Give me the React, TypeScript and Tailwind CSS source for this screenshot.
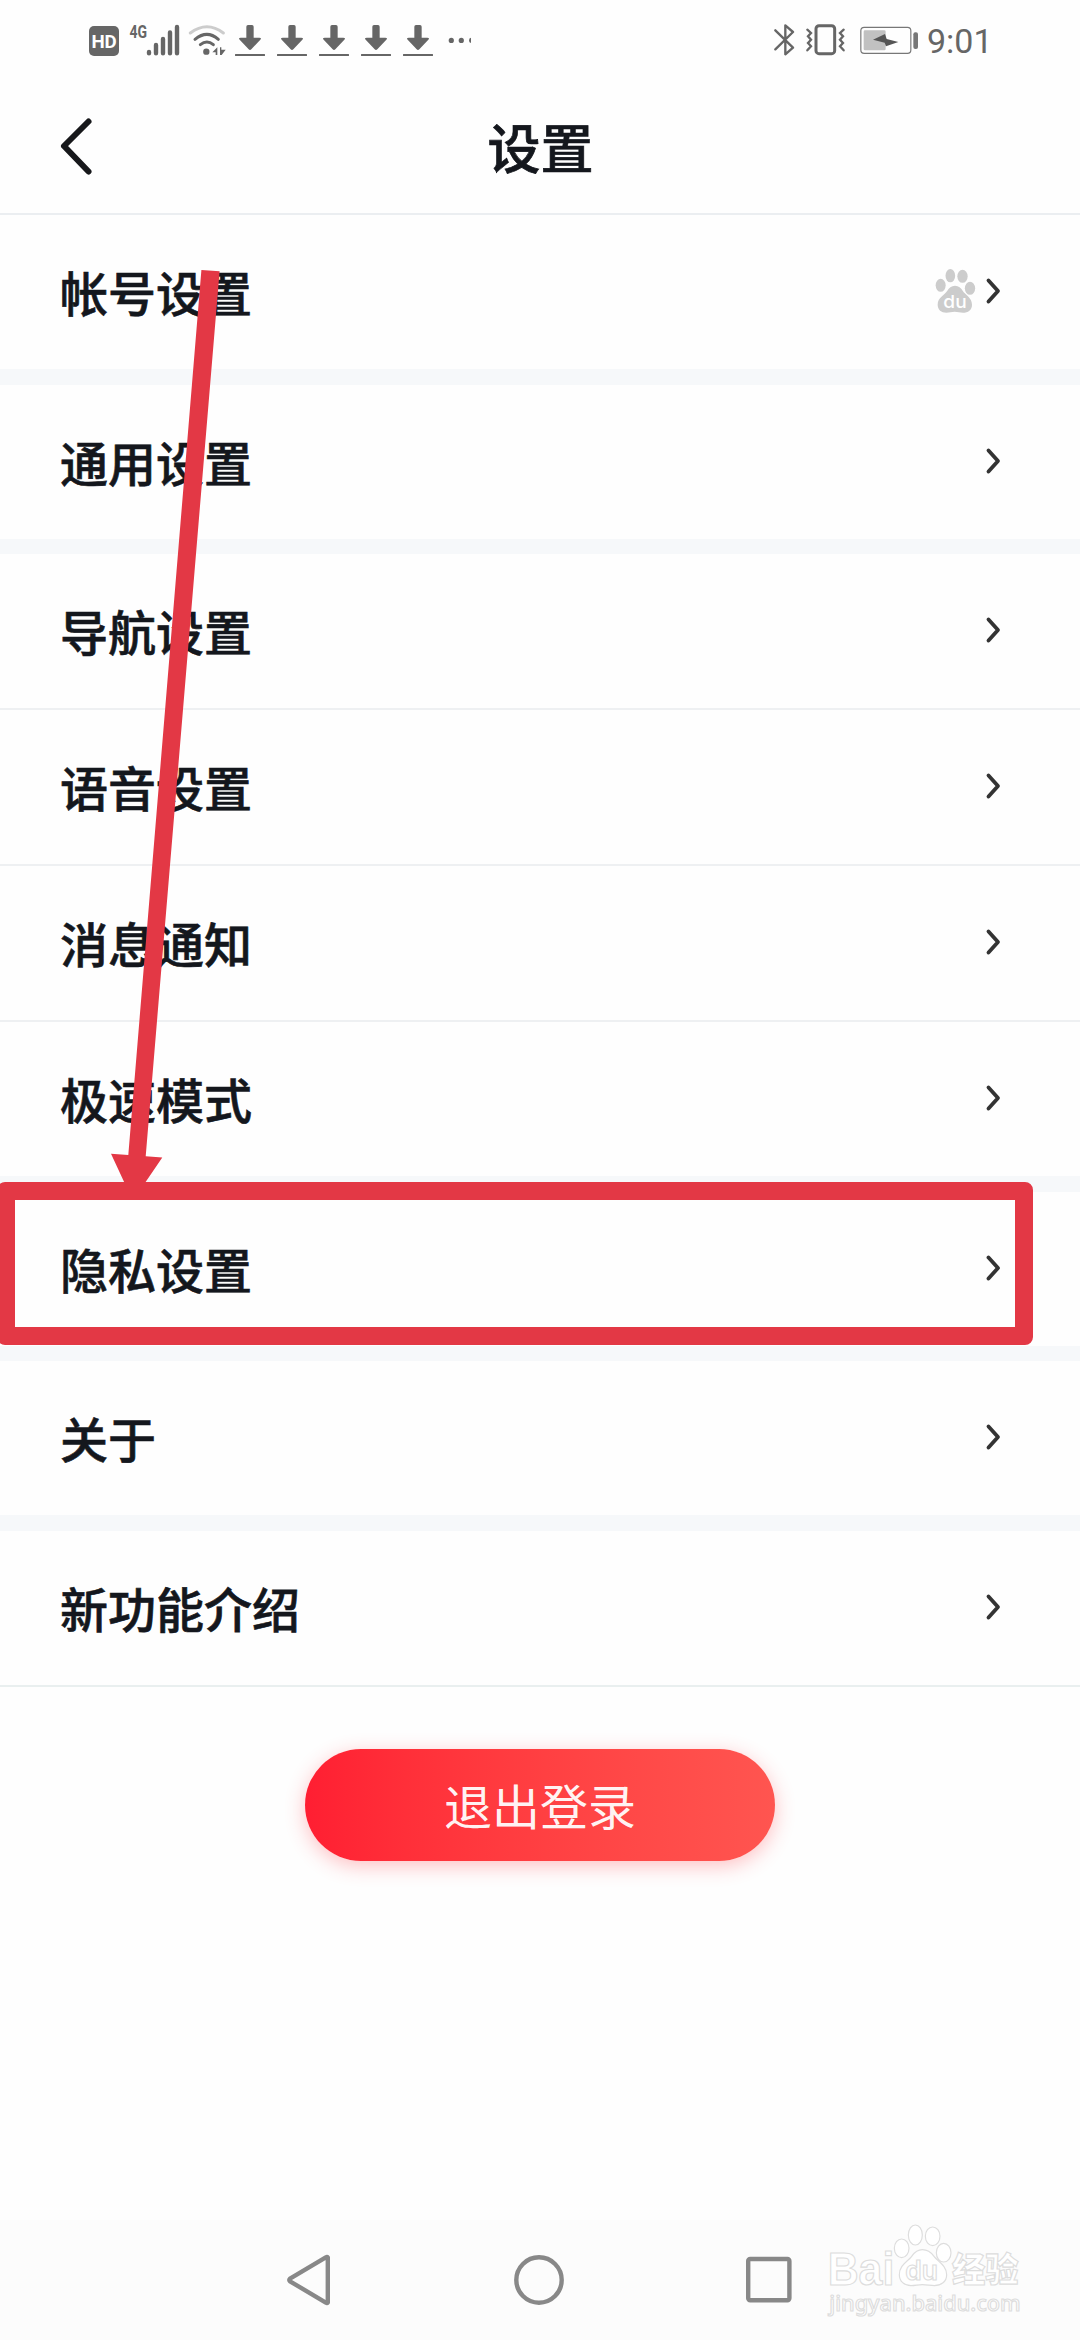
type Row = { label: string; account?: boolean }

const GROUPS: Row[][] = [
  [{ label: '帐号设置', account: true }],
  [{ label: '通用设置' }],
  [
    { label: '导航设置' },
    { label: '语音设置' },
    { label: '消息通知' },
    { label: '极速模式' },
  ],
  [{ label: '隐私设置' }],
  [{ label: '关于' }],
  [{ label: '新功能介绍' }],
]

const Download = () => (
  <svg className="h-[32px] w-[30px]" viewBox="0 0 90 96">
    <path
      d="M39 3h12q5 0 5 5v33h17q8 0 3 6L49 76q-4 4-8 0L14 47q-5-6 3-6h17V8q0-5 5-5z"
      fill="#666"
    />
    <path d="M2 93h86" stroke="#666" strokeWidth="6" strokeLinecap="round" />
  </svg>
)

const StatusBar = () => (
  <div className="flex h-[80px] items-start justify-between pr-[91px] pl-[89px]">
    <div className="flex items-start pt-[24px]">
      <div className="mt-[2px] flex h-[30px] w-[30px] items-center justify-center rounded-[5px] bg-[#666]">
        <svg className="h-[30px] w-[30px]" viewBox="0 0 30 30">
          <text
            x="2.4"
            y="21.6"
            textLength="25.4"
            lengthAdjust="spacingAndGlyphs"
            className="fill-white font-['Roboto',sans-serif] text-[19px] font-bold"
          >
            HD
          </text>
        </svg>
      </div>
      {/* network type + signal bars */}
      <svg
        className="ml-[10px] h-[34px] w-[52px] overflow-visible"
        viewBox="0 0 52 34"
      >
        <text
          x="0.4"
          y="14"
          textLength="17.6"
          lengthAdjust="spacingAndGlyphs"
          className="fill-[#666] font-['Roboto',sans-serif] text-[19px] font-bold"
        >
          4G
        </text>
        <path
          d="M20 28v1.200M27 21v8.200M34 15v14.200M41 8.500v20.700M48 3v26.200"
          stroke="#666"
          strokeWidth="4.4"
          strokeLinecap="round"
        />
      </svg>
      <svg
        className="ml-[7px] h-[34px] w-[40px]"
        viewBox="354 72 120 102"
        fill="none"
        strokeLinecap="round"
      >
        <path d="M361 99Q411 62 460 99" stroke="#ccc" strokeWidth="9" />
        <path d="M375 118Q411 88 445 118" stroke="#666" strokeWidth="9" />
        <path d="M391 134Q411 118 430 134" stroke="#666" strokeWidth="9" />
        <circle cx="409" cy="155" r="9.5" fill="#666" />
        <path d="M442 142v23h-5v-8h-10zM450 165v-23h4v7h13l-12 16z" fill="#666" />
      </svg>
      <div className="ml-[7px] flex gap-[12px]">
        {[0, 1, 2, 3, 4].map((n) => (
          <Download key={n} />
        ))}
      </div>
      <svg className="ml-[15px] h-[32px] w-[23px]" viewBox="0 0 23 32" fill="#666">
        <circle cx="3.3" cy="16.4" r="2.6" />
        <circle cx="13.3" cy="16.4" r="2.6" />
        <circle cx="23.6" cy="16.4" r="2.6" />
      </svg>
    </div>
    <div className="flex items-start pt-[24px]">
      <svg
        className="h-[32px] w-[22px]"
        viewBox="69 72 66 96"
        fill="none"
        stroke="#666"
        strokeWidth="7"
        strokeLinejoin="round"
        strokeLinecap="round"
      >
        <path d="M73 91l53 52-23 20V76l23 20-53 52" />
      </svg>
      <svg
        className="ml-[9px] h-[32px] w-[42px]"
        viewBox="162 72 126 96"
        fill="none"
        stroke="#666"
        strokeLinecap="round"
      >
        <rect x="195" y="77" width="56" height="84" rx="9" strokeWidth="9" />
        <path
          d="M169 89l11 10-9 10 9 10-9 10 9 10-11 12M278 89l-11 10 9 10-9 10 9 10-9 10 11 12"
          strokeWidth="7"
        />
      </svg>
      <svg className="ml-[12px] h-[32px] w-[60px]" viewBox="324 72 180 96">
        <rect
          x="329.5"
          y="82"
          width="150"
          height="78"
          rx="10"
          fill="none"
          stroke="#777"
          strokeWidth="3.5"
        />
        <rect x="338" y="91" width="66" height="60" rx="4" fill="#c1c1c1" />
        <path d="M366 119l36-17 5 15 35 9-37 13-4-11z" fill="#555" />
        <rect x="487" y="97" width="14" height="50" rx="6" fill="#777" />
      </svg>
      <span className="ml-[8px] w-[62px] font-['Roboto',sans-serif] text-[34px] leading-[34px] whitespace-nowrap text-[#666]">
        9:01
      </span>
    </div>
  </div>
)

const Header = () => (
  <header className="flex h-[135px] items-start border-b-2 border-[#ebeef1] pl-[58px]">
    <svg
      className="mt-[36px] h-[60px] w-[38px]"
      viewBox="58 116 38 60"
      fill="none"
      stroke="#17181b"
      strokeWidth="6"
      strokeLinecap="round"
      strokeLinejoin="round"
    >
      <path d="M88.5 121.5L64 146l24.5 25.5" />
    </svg>
    <h1 className="flex-1 pt-[30px] pr-[95px] text-center text-[53px] leading-[72px] font-medium [-webkit-text-stroke:0.7px]">
      设置
    </h1>
  </header>
)

const AccountPaw = () => (
  <svg className="h-[46px] w-[41px]" viewBox="105 145 123 138" fill="#ccc">
    <ellipse cx="122" cy="197" rx="15" ry="19.5" />
    <ellipse cx="151" cy="168" rx="14.5" ry="20" />
    <ellipse cx="187.5" cy="170" rx="15.5" ry="19.5" />
    <ellipse cx="210" cy="206" rx="15.5" ry="19.5" />
    <path d="M165 198c11 0 18 7 23 15 7 12 28 20 28 42 0 16-12 24-27 24-9 0-16-3-25-3s-16 3-25 3c-15 0-26-9-26-24 0-22 21-29 29-42 5-8 12-15 23-15z" />
    <text
      x="130"
      y="264.5"
      textLength="70"
      lengthAdjust="spacingAndGlyphs"
      className="fill-white font-['Inter',sans-serif] text-[53px] font-medium"
    >
      du
    </text>
  </svg>
)

const Chevron = () => (
  <svg
    className="h-[28px] w-[16px]"
    viewBox="0 0 16 28"
    fill="none"
    stroke="#333"
    strokeWidth="3.8"
    strokeLinecap="round"
    strokeLinejoin="round"
  >
    <path d="M3.5 3.5L13 14 3.5 24.5" />
  </svg>
)

const SettingRow = ({ label, account }: Row) => (
  <li className="box-content flex h-[154px] items-center">
    <span className="flex-1 pb-[2px] pl-[60px] text-[48px] leading-[70px] font-medium [-webkit-text-stroke:0.6px]">
      {label}
    </span>
    <span className="flex items-center gap-[9px] pr-[79px] pb-[2px]">
      {account && <AccountPaw />}
      <Chevron />
    </span>
  </li>
)

const NavBar = () => (
  <nav className="flex h-[120px] items-center justify-between bg-[#fcfcfc] pr-[286px] pl-[284px]">
    <svg
      className="h-[54px] w-[50px]"
      viewBox="284 2253 50 54"
      fill="none"
      stroke="#888"
      strokeWidth="4.4"
      strokeLinejoin="round"
    >
      <path d="M327.8 2257.6v44.8q-.5 1-2 .2L290 2281.300q-1.500-1.300 0-2.600l35.800-21.300q1.500-.8 2 .2z" />
    </svg>
    <svg
      className="h-[54px] w-[54px]"
      viewBox="0 0 54 54"
      fill="none"
      stroke="#888"
      strokeWidth="4.4"
    >
      <circle cx="27" cy="27" r="22.7" />
    </svg>
    <svg
      className="h-[54px] w-[50px]"
      viewBox="0 0 50 54"
      fill="none"
      stroke="#888"
      strokeWidth="4.4"
    >
      <rect x="4.2" y="6" width="41.2" height="41.2" rx="2" />
    </svg>
  </nav>
)

const Watermark = () => (
  <svg
    className="absolute top-[2220px] left-[820px] h-[100px] w-[210px]"
    viewBox="60 60 630 300"
    fill="#fff"
    stroke="#ddd"
    strokeWidth="3.5"
  >
    <text
      x="83"
      y="254"
      textLength="200"
      lengthAdjust="spacingAndGlyphs"
      className="font-['Liberation_Sans',sans-serif] text-[136px] font-bold"
    >
      Bai
    </text>
    <ellipse cx="305" cy="145" rx="22" ry="28" />
    <ellipse cx="346" cy="105" rx="21" ry="30" />
    <ellipse cx="398" cy="109" rx="22" ry="28" />
    <ellipse cx="431" cy="158" rx="22" ry="28" />
    <path d="M367 149c-15 0-25 10-32 20-10 15-37 25-37 55 0 20 15 33 35 33 12 0 22-3 34-3 14 0 24 3 36 3 20 0 37-12 37-33 0-28-27-40-38-55-8-11-18-20-35-20z" />
    <text
      x="316"
      y="240"
      textLength="98"
      lengthAdjust="spacingAndGlyphs"
      className="font-['Inter',sans-serif] text-[82px] font-semibold"
    >
      du
    </text>
    <text
      x="456"
      y="245"
      textLength="200"
      lengthAdjust="spacingAndGlyphs"
      className="font-['Noto_Sans_CJK_SC',sans-serif] text-[102px] font-black"
    >
      经验
    </text>
    <text
      x="88"
      y="332"
      textLength="574"
      lengthAdjust="spacingAndGlyphs"
      className="font-['Noto_Sans',sans-serif] text-[66px] font-medium"
    >
      jingyan.baidu.com
    </text>
  </svg>
)

export default function App() {
  return (
    <div className="relative flex h-[2340px] w-[1080px] flex-col overflow-hidden bg-[#fefefe] font-['Noto_Sans_CJK_SC',sans-serif] text-[#14171d]">
      <StatusBar />
      <Header />
      <main className="flex flex-1 flex-col">
        <div className="flex flex-col gap-[15.5px] border-b-2 border-[#e9efef] bg-[#f6f8fa]">
          {GROUPS.map((rows) => (
            <ul
              key={rows[0].label}
              className="divide-y-2 divide-[#eef0f2] bg-[#fefefe]"
            >
              {rows.map((row) => (
                <SettingRow key={row.label} {...row} />
              ))}
            </ul>
          ))}
        </div>
        <button className="mt-[62px] h-[112px] w-[470px] self-center rounded-full bg-linear-to-r from-[#ff1e32] to-[#ff5550] pb-px text-[48px] leading-[70px] text-white/95 shadow-[0_5px_20px_rgba(255,50,60,0.3)]">
          退出登录
        </button>
      </main>
      <NavBar />

      {/* annotation: arrow pointing at the privacy row */}
      <svg
        className="absolute top-[260px] left-[100px] h-[950px] w-[130px]"
        viewBox="100 260 130 950"
        fill="#e33845"
      >
        <path d="M201.4 270L219.6 271.3 145.7 1156.3 162.3 1157.5 134 1199 132 1199 111 1153.7 128.3 1155z" />
      </svg>
      <div className="absolute top-[1182px] left-[-3px] h-[163px] w-[1036px] rounded-[8px] border-[18px] border-[#e33845]" />
      <Watermark />
    </div>
  )
}
